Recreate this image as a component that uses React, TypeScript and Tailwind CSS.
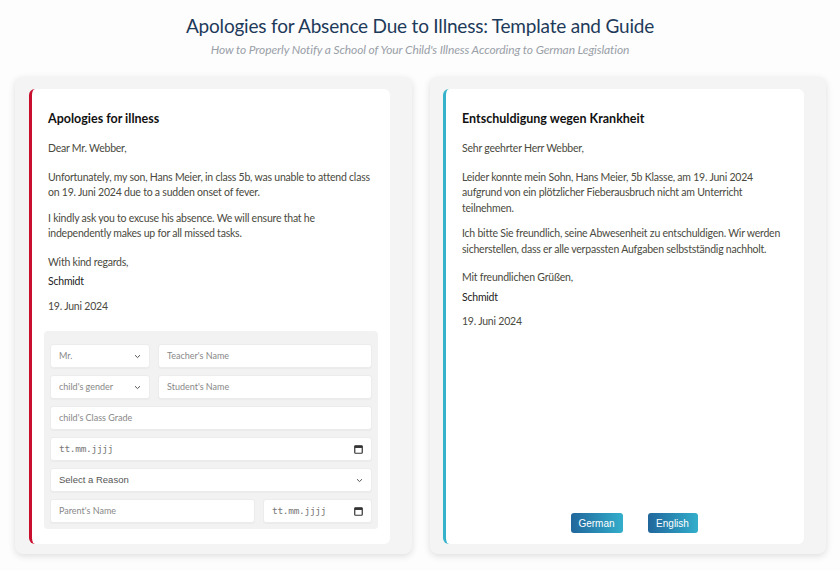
import React from "react";

const font = { fontFamily: "Lato, 'Open Sans', sans-serif" };

function Chevron() {
  return (
    <svg width="7" height="5" viewBox="0 0 7 5" className="shrink-0">
      <path d="M1 1.2 L3.5 3.6 L6 1.2" fill="none" stroke="#555" strokeWidth="1" />
    </svg>
  );
}

function Cal() {
  return (
    <svg width="9" height="9" viewBox="0 0 9 9" className="shrink-0">
      <rect x="0.75" y="0.75" width="7.5" height="7.5" rx="0.8" fill="none" stroke="#333" strokeWidth="1.2" />
      <rect x="0.75" y="0.75" width="7.5" height="2.2" fill="#333" />
    </svg>
  );
}

function Field({ text, select, date, arial, className = "" }: { text: string; select?: boolean; date?: boolean; arial?: boolean; className?: string }) {
  return (
    <div
      className={`h-[24px] bg-white rounded-[3px] border border-[#ececec] shadow-[0_1px_1px_rgba(0,0,0,0.03)] flex items-center justify-between pl-[8px] pr-[8px] ${className}`}
    >
      <span
        className={`${date ? "text-[9.5px] text-[#777]" : arial ? "text-[9.5px] text-[#555]" : "text-[9px] text-[#888]"}`}
        style={date ? { fontFamily: "'DejaVu Sans Mono', monospace", letterSpacing: "-0.3px" } : arial ? { fontFamily: "'Liberation Sans', Arial, sans-serif" } : font}
      >
        {text}
      </span>
      {select && <Chevron />}
      {date && <Cal />}
    </div>
  );
}

const bodyStyle = { letterSpacing: "-0.22px" };

function Letter({ title, lines }: { title: string; lines: string[] }) {
  return (
    <div className="pl-[4px] text-[10.5px] leading-[15.5px] text-[#4a4a40]" style={bodyStyle}>
      <h2 className="text-[12.5px] font-bold text-[#111] leading-[16px]" style={{ letterSpacing: "0" }}>{title}</h2>
      <p className="mt-[14px]">{lines[0]}</p>
      <p className="mt-[13px]">{lines[1]}</p>
      <p className="mt-[10px]">{lines[2]}</p>
      <p className="mt-[13px]">{lines[3]}</p>
      <p className="mt-[4px] text-[#222]">{lines[4]}</p>
      <p className="mt-[9px]">{lines[5]}</p>
    </div>
  );
}

export default function App() {
  return (
    <div className="w-[840px] h-[570px] bg-[#fdfdfd] overflow-hidden" style={font}>
      <div className="pt-[12px] text-center">
        <h1 className="text-[19px] leading-[28px] text-[#1e3a5a]" style={{ letterSpacing: "-0.2px" }}>
          Apologies for Absence Due to Illness: Template and Guide
        </h1>
        <p className="text-[12px] leading-[18px] italic text-[#9aa0a8] mt-[1px]" style={{ letterSpacing: "-0.1px" }}>
          How to Properly Notify a School of Your Child's Illness According to German Legislation
        </p>
      </div>

      <div className="flex gap-[18px] pl-[15px] pr-[14px] mt-[18px]">
        {/* Left */}
        <div className="w-[397px] h-[477px] bg-[#f4f4f4] rounded-[8px] shadow-[0_2px_7px_rgba(0,0,0,0.13)] pt-[12px] pb-[10px] pl-[14px] pr-[22px]">
          <div className="h-full bg-white rounded-[6px] border-l-[3px] border-[#c8102e] px-[12px] pt-[22px]">
            <Letter
              title="Apologies for illness"
              lines={[
                "Dear Mr. Webber,",
                "Unfortunately, my son, Hans Meier, in class 5b, was unable to attend class on 19. Juni 2024 due to a sudden onset of fever.",
                "I kindly ask you to excuse his absence. We will ensure that he independently makes up for all missed tasks.",
                "With kind regards,",
                "Schmidt",
                "19. Juni 2024",
              ]}
            />
            <div className="mt-[17px] bg-[#f2f2f2] rounded-[4px] pt-[13px] pb-[6px] px-[6px] flex flex-col gap-[7px]">
              <div className="flex gap-[8px]">
                <Field text="Mr." select className="w-[100px]" />
                <Field text="Teacher's Name" className="flex-1" />
              </div>
              <div className="flex gap-[8px]">
                <Field text="child's gender" select className="w-[100px]" />
                <Field text="Student's Name" className="flex-1" />
              </div>
              <Field text="child's Class Grade" />
              <Field text="tt.mm.jjjj" date />
              <Field text="Select a Reason" select arial />
              <div className="flex gap-[8px]">
                <Field text="Parent's Name" className="flex-1" />
                <Field text="tt.mm.jjjj" date className="w-[109px]" />
              </div>
            </div>
          </div>
        </div>

        {/* Right */}
        <div className="w-[396px] h-[477px] bg-[#f4f4f4] rounded-[8px] shadow-[0_2px_7px_rgba(0,0,0,0.13)] pt-[12px] pb-[10px] pl-[13px] pr-[22px]">
          <div className="h-full bg-white rounded-[6px] border-l-[3px] border-[#35b3cb] px-[12px] pt-[22px] pb-[11px] flex flex-col">
            <Letter
              title="Entschuldigung wegen Krankheit"
              lines={[
                "Sehr geehrter Herr Webber,",
                "Leider konnte mein Sohn, Hans Meier, 5b Klasse, am 19. Juni 2024 aufgrund von ein plötzlicher Fieberausbruch nicht am Unterricht teilnehmen.",
                "Ich bitte Sie freundlich, seine Abwesenheit zu entschuldigen. Wir werden sicherstellen, dass er alle verpassten Aufgaben selbstständig nachholt.",
                "Mit freundlichen Grüßen,",
                "Schmidt",
                "19. Juni 2024",
              ]}
            />
            <div className="mt-auto flex justify-center gap-[25px] pl-[18px]">
              <button className="w-[52px] h-[20px] rounded-[3px] bg-linear-to-r from-[#21679c] to-[#33aecb] text-white text-[10px]" style={{ fontFamily: "'Liberation Sans', Arial, sans-serif" }}>German</button>
              <button className="w-[50px] h-[20px] rounded-[3px] bg-linear-to-r from-[#21679c] to-[#33aecb] text-white text-[10px]" style={{ fontFamily: "'Liberation Sans', Arial, sans-serif" }}>English</button>
            </div>
          </div>
        </div>
      </div>
    </div>
  );
}
